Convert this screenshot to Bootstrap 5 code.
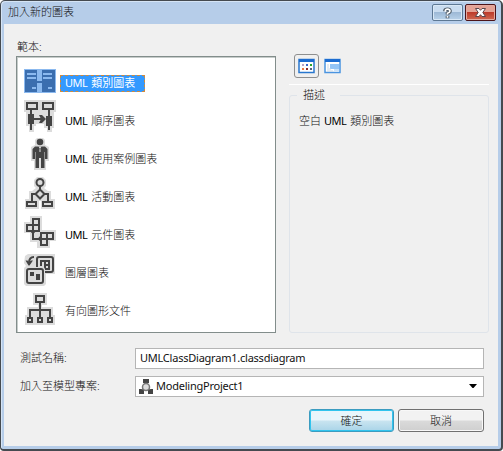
<!DOCTYPE html>
<html lang="zh-Hant">
<head>
<meta charset="utf-8">
<meta name="viewport" content="width=device-width, initial-scale=1">
<title>加入新的圖表</title>
<link href="https://cdn.jsdelivr.net/npm/bootstrap@5.3.0/dist/css/bootstrap.min.css" rel="stylesheet">
<style>
body{margin:0;overflow:hidden;background:#fff;font:300 11px/16px "Noto Sans","Noto Sans CJK TC",sans-serif;color:#111}
svg{display:block;flex:none}
.dialog-frame{width:503px;height:451px;background:#b6cde9;border:1px solid #454a50;border-right-width:2px;border-bottom-width:2px;border-radius:5px 5px 4px 4px;padding:0 3px 3px;box-shadow:inset 1px 1px #d5e4f5}
.title-strip{height:23px;padding:0 2px 0 4px}
.title-name{padding-top:3px}
.cap-btn{width:31px;height:17px;margin-top:3px;padding:0;border:1px solid #5d7894;border-radius:2px;background:linear-gradient(#c9dcf0 45%,#9db9d6 50%,#b9d2ea);box-shadow:inset 0 0 0 1px #d9e8f6}
.cap-close{border-color:#4b1319;background:linear-gradient(#e4a295 45%,#bd3b2b 50%,#cf6851);box-shadow:inset 0 0 0 1px #e4aaa0}
.cap-group{gap:2px}
.client{height:422px;background:#f0f0f0;padding:15px 14px 0 12px}
.tpl-caption{padding-left:1px}
.tpl-box{width:260px;height:277px;margin-top:1px;background:#fff;border:1px solid #828d8b;box-shadow:inset 1px 1px #c6ccca;padding:7px}
.tpl-item{height:38px;gap:4px}
.tpl-item svg{align-self:flex-start}
.tpl-text{height:17px;line-height:14px;padding:0 4px;border:1px solid transparent;white-space:pre}
.tpl-text.chosen{background:#3399ff;color:#fff;font-weight:400;border:1px dashed #d08a3c;width:85px}
.tpl-text.chosen .lat{color:#fff}
.lat{color:#000;font-weight:400;letter-spacing:-.45px;margin-right:1px}
.m1{margin-top:5px}.m2{margin-top:-2px}.m3{margin-top:-1px}.m5{margin-top:1px}
.view-on{width:25px;height:24px;border:1px solid #8e8f8f;border-radius:3px;padding:3px}
.view-row{padding:15px 0 1px 5px;gap:5px}
.side{width:200px;margin-right:-5px}
.rule-line{height:1px;background:#fff;margin-top:5px}
.desc-box{height:238px;margin-top:10px;border:1px solid #dfe4ea;border-radius:3px;padding:0 9px}
.desc-title{width:43px;margin:-9px 0 0 -2px;padding-left:6px;background:#f0f0f0}
.desc-body{margin-top:10px}
.field-label{width:119px;padding-left:4px;margin-top:-2px}
.field-box{width:349px;height:21px;background:#fff;border:1px solid #b5b5b5;border-radius:0;padding:0 4px 2px;color:#111;font-weight:400;letter-spacing:-.23px}
.project-box{padding:0 6px 0 3px}
.project-name{margin:-2px auto 0 3px}
.row-name{margin-top:15px}
.row-project{margin-top:7px}
.row-actions{margin:12px 0 0;gap:4px;padding-left:293px}
.dlg-btn{width:86px;height:23px;font-size:11px;line-height:20px;padding:0;border:1px solid #707070;border-radius:3px;color:#111;font-weight:300;background:linear-gradient(#f2f2f2 0 48%,#dadada 52%,#cfcfcf);box-shadow:inset 0 0 0 1px #f8f8f8}
.dlg-ok{width:85px;border-color:#3c9cc0;background:linear-gradient(#e8f5fb 0 48%,#c9e4f0 52%,#a9d4e8);box-shadow:inset 0 0 0 1px #31c4ee}
.halo{fill:#dcdcdc}
.ln{fill:none;stroke:#444;stroke-width:2}
.sd{fill:#444}
</style>
<script src="https://cdn.jsdelivr.net/npm/bootstrap@5.3.0/dist/js/bootstrap.bundle.min.js"></script>
</head>
<body>
<div class="dialog-frame">
  <div class="title-strip d-flex align-items-start">
    <span class="title-name me-auto">加入新的圖表</span>
    <div class="cap-group d-flex">
      <button class="cap-btn d-flex justify-content-center align-items-center" aria-label="Help"><svg width="11" height="12" viewBox="0 0 11 12"><path d="M3 4.200V3.500Q3.200 2.200 5.500 2.200T8 4Q8 5.300 5.500 6.200V7.400M5.500 8.800V11.200" fill="none" stroke="#4d5965" stroke-width="3.600"/><path d="M2.500 4H3.300Q3.200 2.200 5.500 2.200T8 4Q8 5.300 5.500 6.200V7.600M5.500 9V10.800" fill="none" stroke="#fff" stroke-width="1.700"/></svg></button>
      <button class="cap-btn cap-close d-flex justify-content-center align-items-center" aria-label="Close"><svg width="13" height="11" viewBox="0 0 13 11"><path d="M1.500 1.500H5L6.500 3.300 8 1.500H11.500L8.800 5.500 11.500 9.500H8L6.500 7.700 5 9.500H1.500L4.200 5.500Z" fill="#fff" stroke="#59464c"/></svg></button>
    </div>
  </div>
  <div class="client">
    <div class="d-flex justify-content-between">
      <div>
        <div class="tpl-caption">範本:</div>
        <div class="tpl-box">
          <div class="tpl-item d-flex align-items-center"><svg class="m1" width="32" height="24"><path fill="#8bb9ef" d="M0 0H32V24H0Z"/><path fill="#3b6eaf" d="M1 1H13V12H18V1H31V23H18V14H13V23H1Z"/><path d="M3 5H12M3 9H12M19 5H28M19 9H28M8 19H12M24 19H28" stroke="#8bb9ef" stroke-width="2"/></svg><span class="tpl-text chosen"><span class="lat">UML</span> 類別圖表</span></div>
          <div class="tpl-item d-flex align-items-center"><svg class="m2" width="32" height="32"><path class="halo" d="M0 0H32V12H30V28H28V32H23V28H20V24H12V26H10V32H5V26H2V12H0Z"/><path class="ln" d="M3 3H13V9H3ZM19 3H29V9H19ZM7 9V30M25 9V30M10 19H19"/><path class="sd" d="M4 14H10V24H4ZM22 16H28V26H22ZM15 15H18L22 19 18 23H15L17 19Z"/></svg><span class="tpl-text"><span class="lat">UML</span> 順序圖表</span></div>
          <div class="tpl-item d-flex align-items-center"><svg class="m2" width="32" height="32"><path class="halo" d="M13 0H19L21 2V7L25 9V23H22V32H10V23H7V9L11 7V2Z"/><circle class="sd" cx="16" cy="4" r="3.300"/><path class="sd" d="M11 8.500H21L23.500 11V21H21V14H20.500V30H17V20H15V30H11.500V14H11V21H8.500V11Z"/><path d="M14.500 8.500H17.500L16.500 10 17 13 16 14 15 13 15.500 10Z" fill="#e8e8e8"/><path d="M16 10V13" stroke="#555"/></svg><span class="tpl-text"><span class="lat">UML</span> 使用案例圖表</span></div>
          <div class="tpl-item d-flex align-items-center"><svg class="m3" width="32" height="32"><path class="halo" d="M13 0H19L22 3V9L20 11 24 14H27V22H31V32H17V24H15V32H1V22H5V14H8L12 11 10 9V3Z"/><circle class="ln" cx="16" cy="5.500" r="3.500"/><path class="ln" d="M16 9V12.500L20.500 17 16 21.500 11.500 17 16 12.500M11 17H8V25M21 17H24V25M3 25H12V29H3ZM19 25H28V29H19Z"/></svg><span class="tpl-text"><span class="lat">UML</span> 活動圖表</span></div>
          <div class="tpl-item d-flex align-items-center"><svg width="32" height="32"><path class="halo" d="M6 0H18V14H32V25H26V32H13V26H6V17H0V6H6Z"/><path class="ln" d="M9 3H15V9H9ZM3 9H9V15H3ZM9 9H15V15H9ZM17 17H23V23H17ZM23 17H29V23H23ZM17 23H23V29H17ZM9 15V23H17"/><path class="sd" d="M6 15H12L9 18.500ZM17 19V26L13.500 23Z"/></svg><span class="tpl-text"><span class="lat">UML</span> 元件圖表</span></div>
          <div class="tpl-item d-flex align-items-center"><svg width="32" height="32"><path class="halo" d="M1 2 4 0H31V20H22V30L20 32H2L0 30V14L2 12 0 9Z"/><rect class="ln" x="13" y="3" width="16" height="15" rx="2"/><path class="ln" d="M17 12V7H25V15H21M21 7V15M21 11H25"/><rect x="1" y="13" width="20" height="18" rx="3" fill="#dcdcdc"/><rect class="ln" x="3" y="15" width="16" height="14" rx="2"/><path class="sd" d="M6 18H10V22H6ZM12 20H16V26H12Z"/><path class="ln" d="M10 3Q5 3 5 9"/><path class="sd" d="M1.500 6.500H3.500L5 8 7 6.500H9L5.500 11.500H4.500Z"/></svg><span class="tpl-text">圖層圖表</span></div>
          <div class="tpl-item d-flex align-items-center"><svg class="m5" width="32" height="32"><path class="halo" d="M9 0H23V12H18V14H29V22H31V32H1V22H3V14H14V12H9Z"/><path class="ln" d="M12 3H20V9H12ZM16 9V24M6 24V17H26V24M4 25H8V29H4ZM14 25H18V29H14ZM24 25H28V29H24Z"/></svg><span class="tpl-text">有向圖形文件</span></div>
        </div>
      </div>
      <div class="side">
        <div class="view-row d-flex align-items-center">
          <div class="view-on"><svg width="17" height="16"><rect x="1" y="1.500" width="15" height="13" fill="#fff" stroke="#2877ce" stroke-width="1.500"/><path d="M1 2.500H16" stroke="#1c6cd0" stroke-width="3"/><path d="M4 6h2v2H4Z" fill="#b9a4c6"/><path d="M8 6h2v2H8Z" fill="#3a67c9"/><path d="M12 6h2v2h-2Z" fill="#27a52a"/><path d="M4 10h2v2H4Z" fill="#ed7842"/><path d="M8 10h2v2H8Z" fill="#8c2b2b"/><path d="M12 10h2v2h-2Z" fill="#55647d"/></svg></div>
          <svg width="17" height="16"><rect x="1" y="1.500" width="15" height="13" fill="#fff" stroke="#4a94e0" stroke-width="1.500"/><path d="M1 2.500H16" stroke="#1c6cd0" stroke-width="3"/><path d="M6 6H15V11H6Z" fill="#94c5f6"/><path d="M3 7H5M3 9H5M3 11H7M3 13H9" stroke="#c8d6e4"/><path d="M10 11H15V13H10Z" fill="#c9e2fa"/></svg>
        </div>
        <div class="rule-line"></div>
        <div class="desc-box"><div class="desc-title">描述</div><div class="desc-body">空白 <span class="lat">UML</span> 類別圖表</div></div>
      </div>
    </div>
    <div class="row-name d-flex align-items-center"><label class="field-label" for="nm">測試名稱:</label><input id="nm" class="field-box" value="UMLClassDiagram1.classdiagram"></div>
    <div class="row-project d-flex align-items-center"><span class="field-label">加入至模型專案:</span><div class="field-box project-box d-flex align-items-center"><svg width="14" height="15"><path fill="#444" d="M4 0H10V4H4ZM0 10H5V15H0ZM9 10H14V15H9Z"/><path d="M3 11 5 5H9L11 11" fill="none" stroke="#777"/><circle cx="7" cy="8" r="3.500" fill="#ddd" stroke="#777" stroke-width="1.500"/></svg><span class="project-name">ModelingProject1</span><svg width="8" height="5"><path d="M0 0H8L4.500 4H3.500Z" fill="#000"/></svg></div></div>
    <div class="row-actions d-flex"><button class="dlg-btn dlg-ok">確定</button><button class="dlg-btn">取消</button></div>
  </div>
</div>
</body>
</html>
